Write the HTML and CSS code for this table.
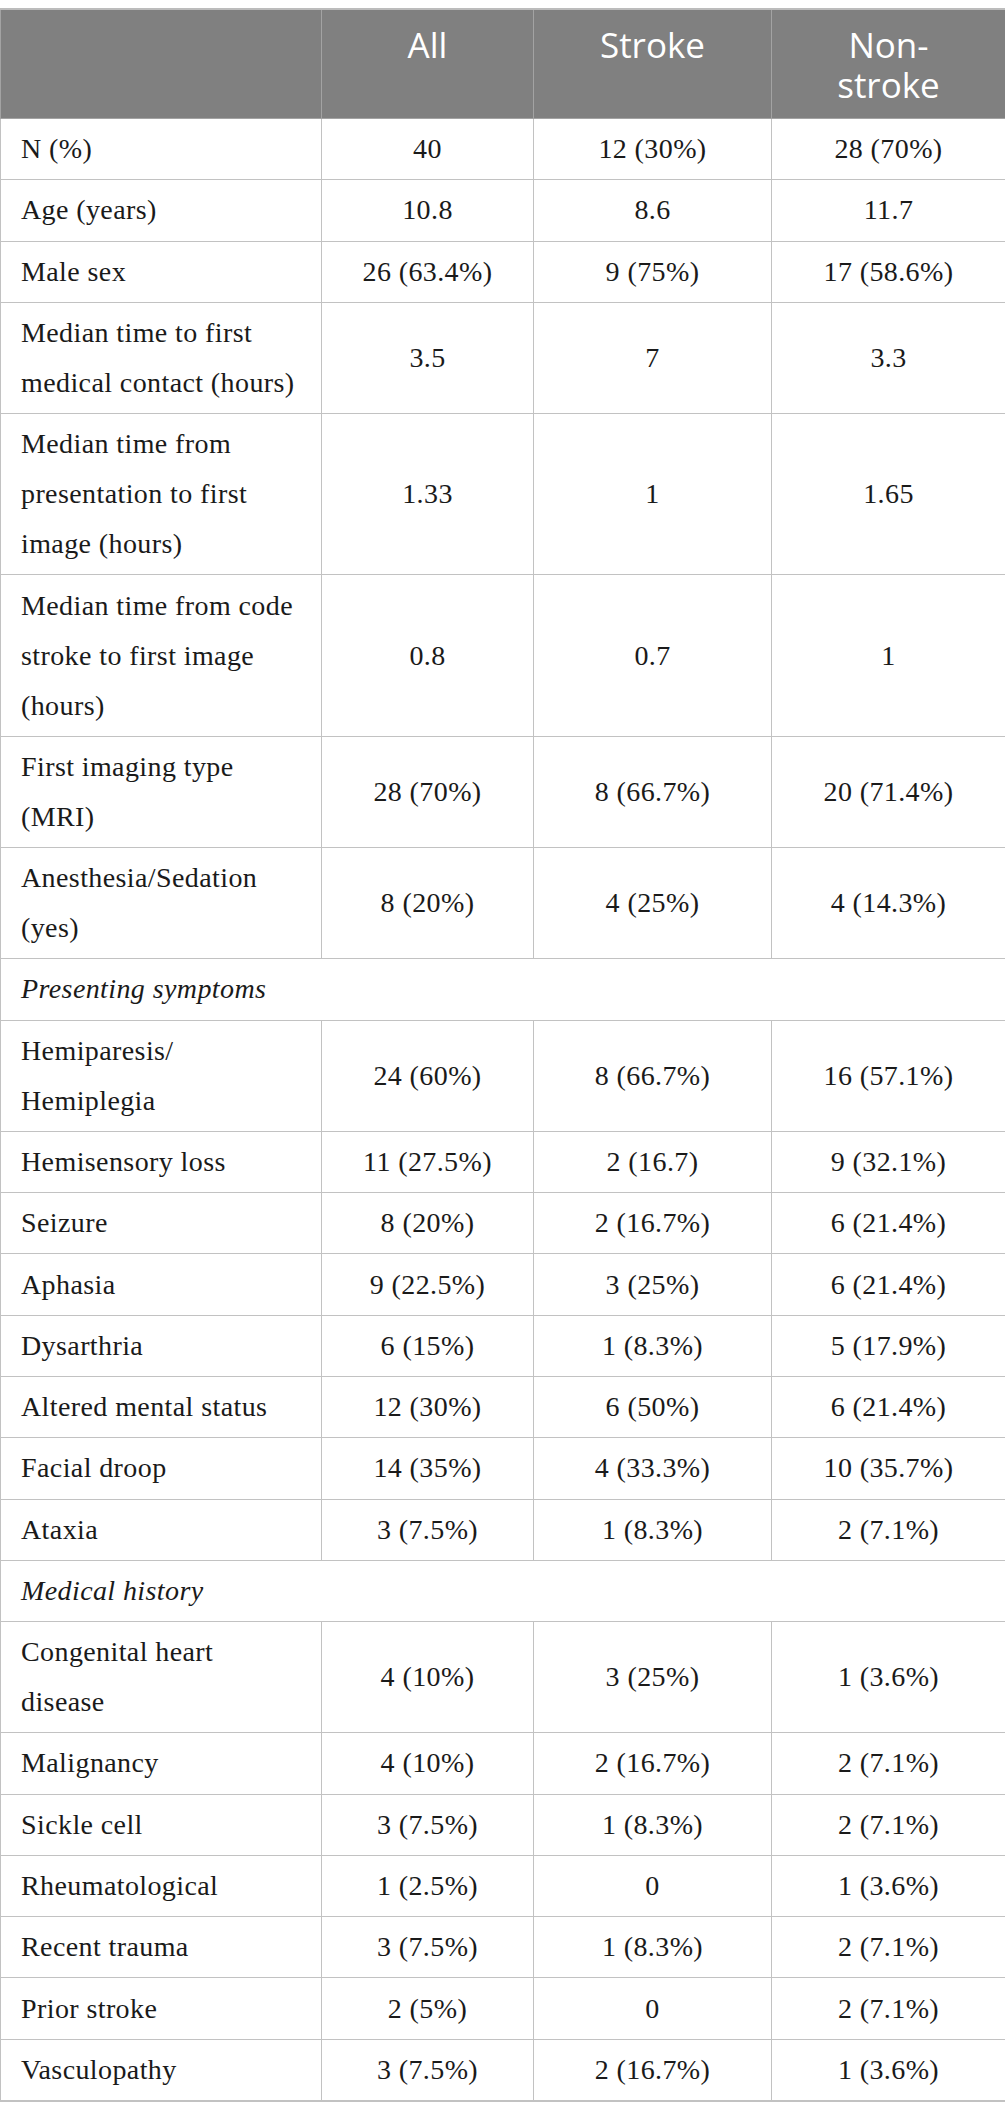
FILE: index.html
```html
<!DOCTYPE html>
<html lang="en">
<head>
<meta charset="utf-8">
<title>Table</title>
<link rel="stylesheet" href="styles.css">
</head>
<body>
<table class="data">
  <colgroup>
    <col class="c1"><col class="c2"><col class="c3"><col class="c4">
  </colgroup>
  <thead>
    <tr>
      <th class="blank"></th>
      <th>All</th>
      <th>Stroke</th>
      <th>Non-<br>stroke</th>
    </tr>
  </thead>
  <tbody>
    <tr><td class="lbl">N (%)</td><td>40</td><td>12 (30%)</td><td>28 (70%)</td></tr>
    <tr><td class="lbl">Age (years)</td><td>10.8</td><td>8.6</td><td>11.7</td></tr>
    <tr><td class="lbl">Male sex</td><td>26 (63.4%)</td><td>9 (75%)</td><td>17 (58.6%)</td></tr>
    <tr><td class="lbl">Median time to first medical contact (hours)</td><td>3.5</td><td>7</td><td>3.3</td></tr>
    <tr><td class="lbl">Median time from presentation to first image (hours)</td><td>1.33</td><td>1</td><td>1.65</td></tr>
    <tr><td class="lbl">Median time from code stroke to first image (hours)</td><td>0.8</td><td>0.7</td><td>1</td></tr>
    <tr><td class="lbl">First imaging type (MRI)</td><td>28 (70%)</td><td>8 (66.7%)</td><td>20 (71.4%)</td></tr>
    <tr><td class="lbl">Anesthesia/Sedation (yes)</td><td>8 (20%)</td><td>4 (25%)</td><td>4 (14.3%)</td></tr>
    <tr><td class="section" colspan="4">Presenting symptoms</td></tr>
    <tr><td class="lbl">Hemiparesis/<br>Hemiplegia</td><td>24 (60%)</td><td>8 (66.7%)</td><td>16 (57.1%)</td></tr>
    <tr><td class="lbl">Hemisensory loss</td><td>11 (27.5%)</td><td>2 (16.7)</td><td>9 (32.1%)</td></tr>
    <tr><td class="lbl">Seizure</td><td>8 (20%)</td><td>2 (16.7%)</td><td>6 (21.4%)</td></tr>
    <tr><td class="lbl">Aphasia</td><td>9 (22.5%)</td><td>3 (25%)</td><td>6 (21.4%)</td></tr>
    <tr><td class="lbl">Dysarthria</td><td>6 (15%)</td><td>1 (8.3%)</td><td>5 (17.9%)</td></tr>
    <tr><td class="lbl">Altered mental status</td><td>12 (30%)</td><td>6 (50%)</td><td>6 (21.4%)</td></tr>
    <tr><td class="lbl">Facial droop</td><td>14 (35%)</td><td>4 (33.3%)</td><td>10 (35.7%)</td></tr>
    <tr><td class="lbl">Ataxia</td><td>3 (7.5%)</td><td>1 (8.3%)</td><td>2 (7.1%)</td></tr>
    <tr><td class="section" colspan="4">Medical history</td></tr>
    <tr><td class="lbl">Congenital heart<br>disease</td><td>4 (10%)</td><td>3 (25%)</td><td>1 (3.6%)</td></tr>
    <tr><td class="lbl">Malignancy</td><td>4 (10%)</td><td>2 (16.7%)</td><td>2 (7.1%)</td></tr>
    <tr><td class="lbl">Sickle cell</td><td>3 (7.5%)</td><td>1 (8.3%)</td><td>2 (7.1%)</td></tr>
    <tr><td class="lbl">Rheumatological</td><td>1 (2.5%)</td><td>0</td><td>1 (3.6%)</td></tr>
    <tr><td class="lbl">Recent trauma</td><td>3 (7.5%)</td><td>1 (8.3%)</td><td>2 (7.1%)</td></tr>
    <tr><td class="lbl">Prior stroke</td><td>2 (5%)</td><td>0</td><td>2 (7.1%)</td></tr>
    <tr><td class="lbl">Vasculopathy</td><td>3 (7.5%)</td><td>2 (16.7%)</td><td>1 (3.6%)</td></tr>
  </tbody>
</table>
</body>
</html>
```

FILE: styles.css
```css
html, body {
  margin: 0;
  padding: 0;
  background: #ffffff;
}

body {
  padding-top: 8px;
}

.data {
  width: 1005px;
  table-layout: fixed;
  border-collapse: collapse;
  font-family: "Liberation Serif", "Times New Roman", serif;
  font-size: 28px;
  letter-spacing: 0.4px;
  color: #1a1a1a;
}

.c1 { width: 321px; }
.c2 { width: 212px; }
.c3 { width: 238px; }
.c4 { width: 234px; }

.data th {
  background: #808080;
  color: #ffffff;
  font-family: "Open Sans", "Liberation Sans", sans-serif;
  font-weight: 400;
  font-size: 35px;
  letter-spacing: 0;
  line-height: 40px;
  text-align: center;
  vertical-align: top;
  padding: 15px 8px 13px;
  border: 1px solid #a3a3a3;
  border-top: 2px solid #bcbcbc;
}

.data td {
  border: 1px solid #c2c2c2;
  line-height: 50px;
  padding: 5.15px 8px;
  text-align: center;
  vertical-align: middle;
}

.data td.lbl {
  text-align: left;
  padding-left: 20px;
  padding-right: 20px;
}

.data td.section {
  text-align: left;
  font-style: italic;
  padding-left: 20px;
}

.data tbody tr:last-child td {
  border-bottom: 2px solid #c2c2c2;
}
```
